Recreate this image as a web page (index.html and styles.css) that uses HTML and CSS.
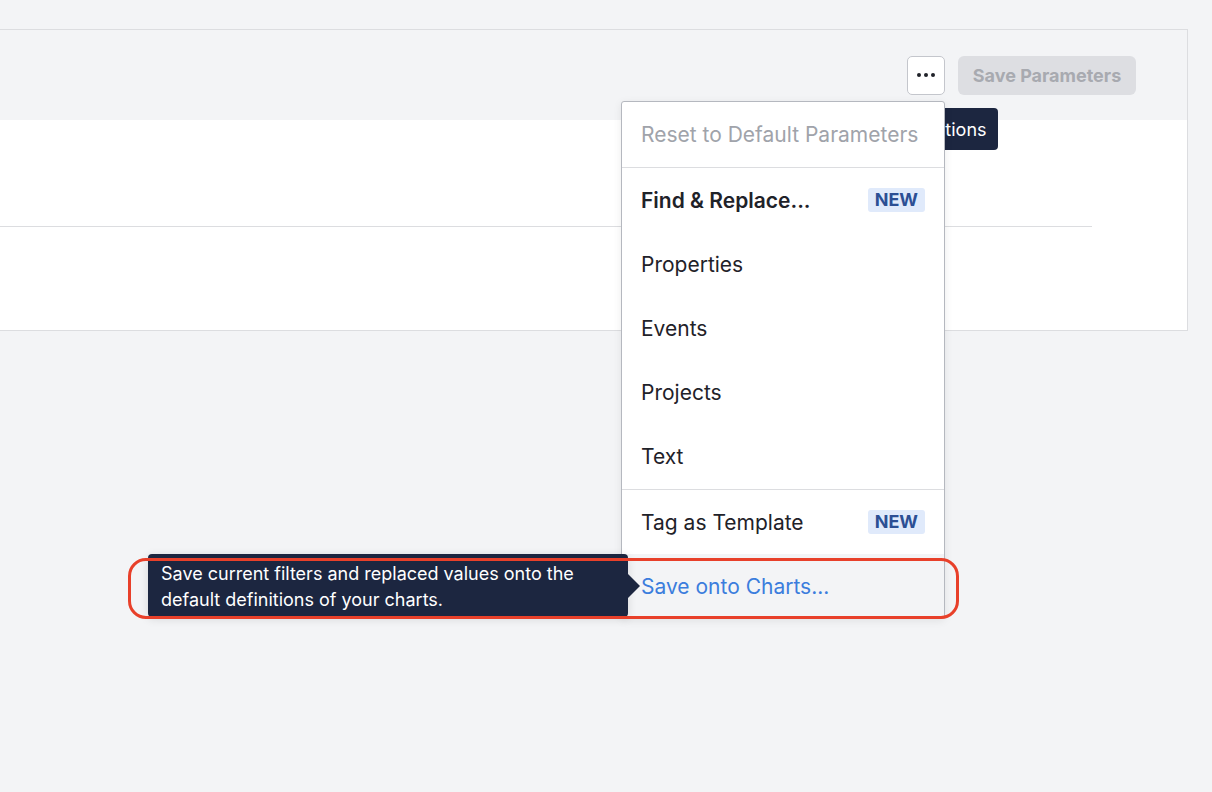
FILE: index.html
```html
<!DOCTYPE html>
<html>
  <head>
    <title>Dashboard Parameters</title>
    <link rel="stylesheet" href="styles.css">
  </head>
  <body>
    <div class="page">
      <div class="panel">
        <div class="panel-header">
          <button class="more-button" aria-label="More Options">
            <span class="dot"></span><span class="dot"></span><span class="dot"></span>
          </button>
          <button class="save-button" disabled>Save Parameters</button>
        </div>
        <div class="panel-body">
          <div class="param-row"></div>
          <div class="param-row last"></div>
        </div>
      </div>

      <!-- tooltip of the "..." button, mostly hidden by the menu -->
      <div class="tip-options">More Options</div>

      <div class="menu">
        <div class="menu-item disabled">Reset to Default Parameters</div>
        <div class="menu-sep"></div>
        <div class="menu-item bold">Find &amp; Replace... <span class="badge">NEW</span></div>
        <div class="menu-item">Properties</div>
        <div class="menu-item">Events</div>
        <div class="menu-item">Projects</div>
        <div class="menu-item">Text</div>
        <div class="menu-sep"></div>
        <div class="menu-item">Tag as Template <span class="badge">NEW</span></div>
        <div class="menu-item hover">Save onto Charts...</div>
      </div>

      <div class="tip-save">Save current filters and replaced values onto the default definitions of your charts.</div>

      <div class="highlight"></div>
    </div>
  </body>
</html>
```

FILE: styles.css
```css
body {
  margin: 0;
  background-color: #f3f4f6;
  font-family: Inter, "Noto Sans", sans-serif;
  color: #1f2229;
}

.page {
  position: relative;
  height: 792px;
  padding-top: 29px;
  box-sizing: border-box;
  overflow: hidden;
}

.panel {
  width: 1187px;
  border-top: 1px solid #dcdde0;
  border-right: 1px solid #dcdde0;
  border-bottom: 1px solid #dcdde0;
}

.panel-header {
  height: 90px;
  display: flex;
  align-items: center;
  justify-content: flex-end;
  gap: 13px;
  padding-right: 51px;
  background-color: #f3f4f6;
}

.more-button {
  width: 38px;
  height: 39px;
  border: 1px solid #c4c6cc;
  border-radius: 5px;
  background-color: white;
  display: flex;
  align-items: center;
  justify-content: center;
  gap: 3px;
  padding: 0;
}

.dot {
  width: 4px;
  height: 4px;
  border-radius: 50%;
  background-color: #1f2229;
}

.save-button {
  width: 178px;
  height: 39px;
  border: none;
  border-radius: 6px;
  background-color: #dddee2;
  color: #a8aab0;
  font-family: inherit;
  font-size: 18px;
  font-weight: bold;
}

.panel-body {
  background-color: white;
  height: 210px;
}

.param-row {
  height: 106px;
  margin-right: 95px;
  border-bottom: 1px solid #dcdde0;
}

.param-row.last {
  border-bottom: none;
}

.tip-options {
  position: absolute;
  left: 860px;
  top: 108px;
  width: 138px;
  height: 42px;
  box-sizing: border-box;
  display: flex;
  align-items: center;
  justify-content: center;
  background-color: #1c2640;
  color: white;
  font-size: 18px;
  border-radius: 4px;
}

.tip-options::before {
  content: "";
  position: absolute;
  left: 60px;
  top: -11px;
  border: 6px solid transparent;
  border-bottom: 6px solid #1c2640;
}

.menu {
  position: absolute;
  left: 621px;
  top: 101px;
  width: 322px;
  background-color: white;
  border: 1px solid #b5b8bf;
  border-radius: 3px;
  box-shadow: 0 2px 8px rgba(0, 0, 0, 0.08);
}

.menu-item {
  height: 64px;
  display: flex;
  align-items: center;
  justify-content: space-between;
  padding: 0 19px;
  font-size: 21px;
}

.menu-item.disabled {
  color: #a0a3aa;
}

.menu-item.bold {
  font-weight: 600;
}

.menu-item.hover {
  background-color: #f3f4f6;
  color: #3b7ddd;
}

.menu-sep {
  height: 1px;
  margin-top: 1px;
  background-color: #dcdde0;
}

.badge {
  display: inline-block;
  background-color: #e0eafb;
  color: #2c4f94;
  font-size: 18px;
  font-weight: bold;
  line-height: 24px;
  padding: 0 7px;
  border-radius: 3px;
}

.tip-save {
  position: absolute;
  left: 148px;
  top: 554px;
  width: 480px;
  height: 63px;
  box-sizing: border-box;
  padding: 7px 13px;
  background-color: #1c2640;
  color: white;
  font-size: 18px;
  line-height: 26px;
  border-radius: 4px;
  box-shadow: 0 2px 10px rgba(0, 0, 0, 0.12);
}

.tip-save::after {
  content: "";
  position: absolute;
  right: -24px;
  top: 20px;
  border: 12px solid transparent;
  border-left: 12px solid #1c2640;
}

.highlight {
  position: absolute;
  left: 128px;
  top: 558px;
  width: 831px;
  height: 61px;
  box-sizing: border-box;
  border: 3px solid #e8402a;
  border-radius: 18px;
}
```
